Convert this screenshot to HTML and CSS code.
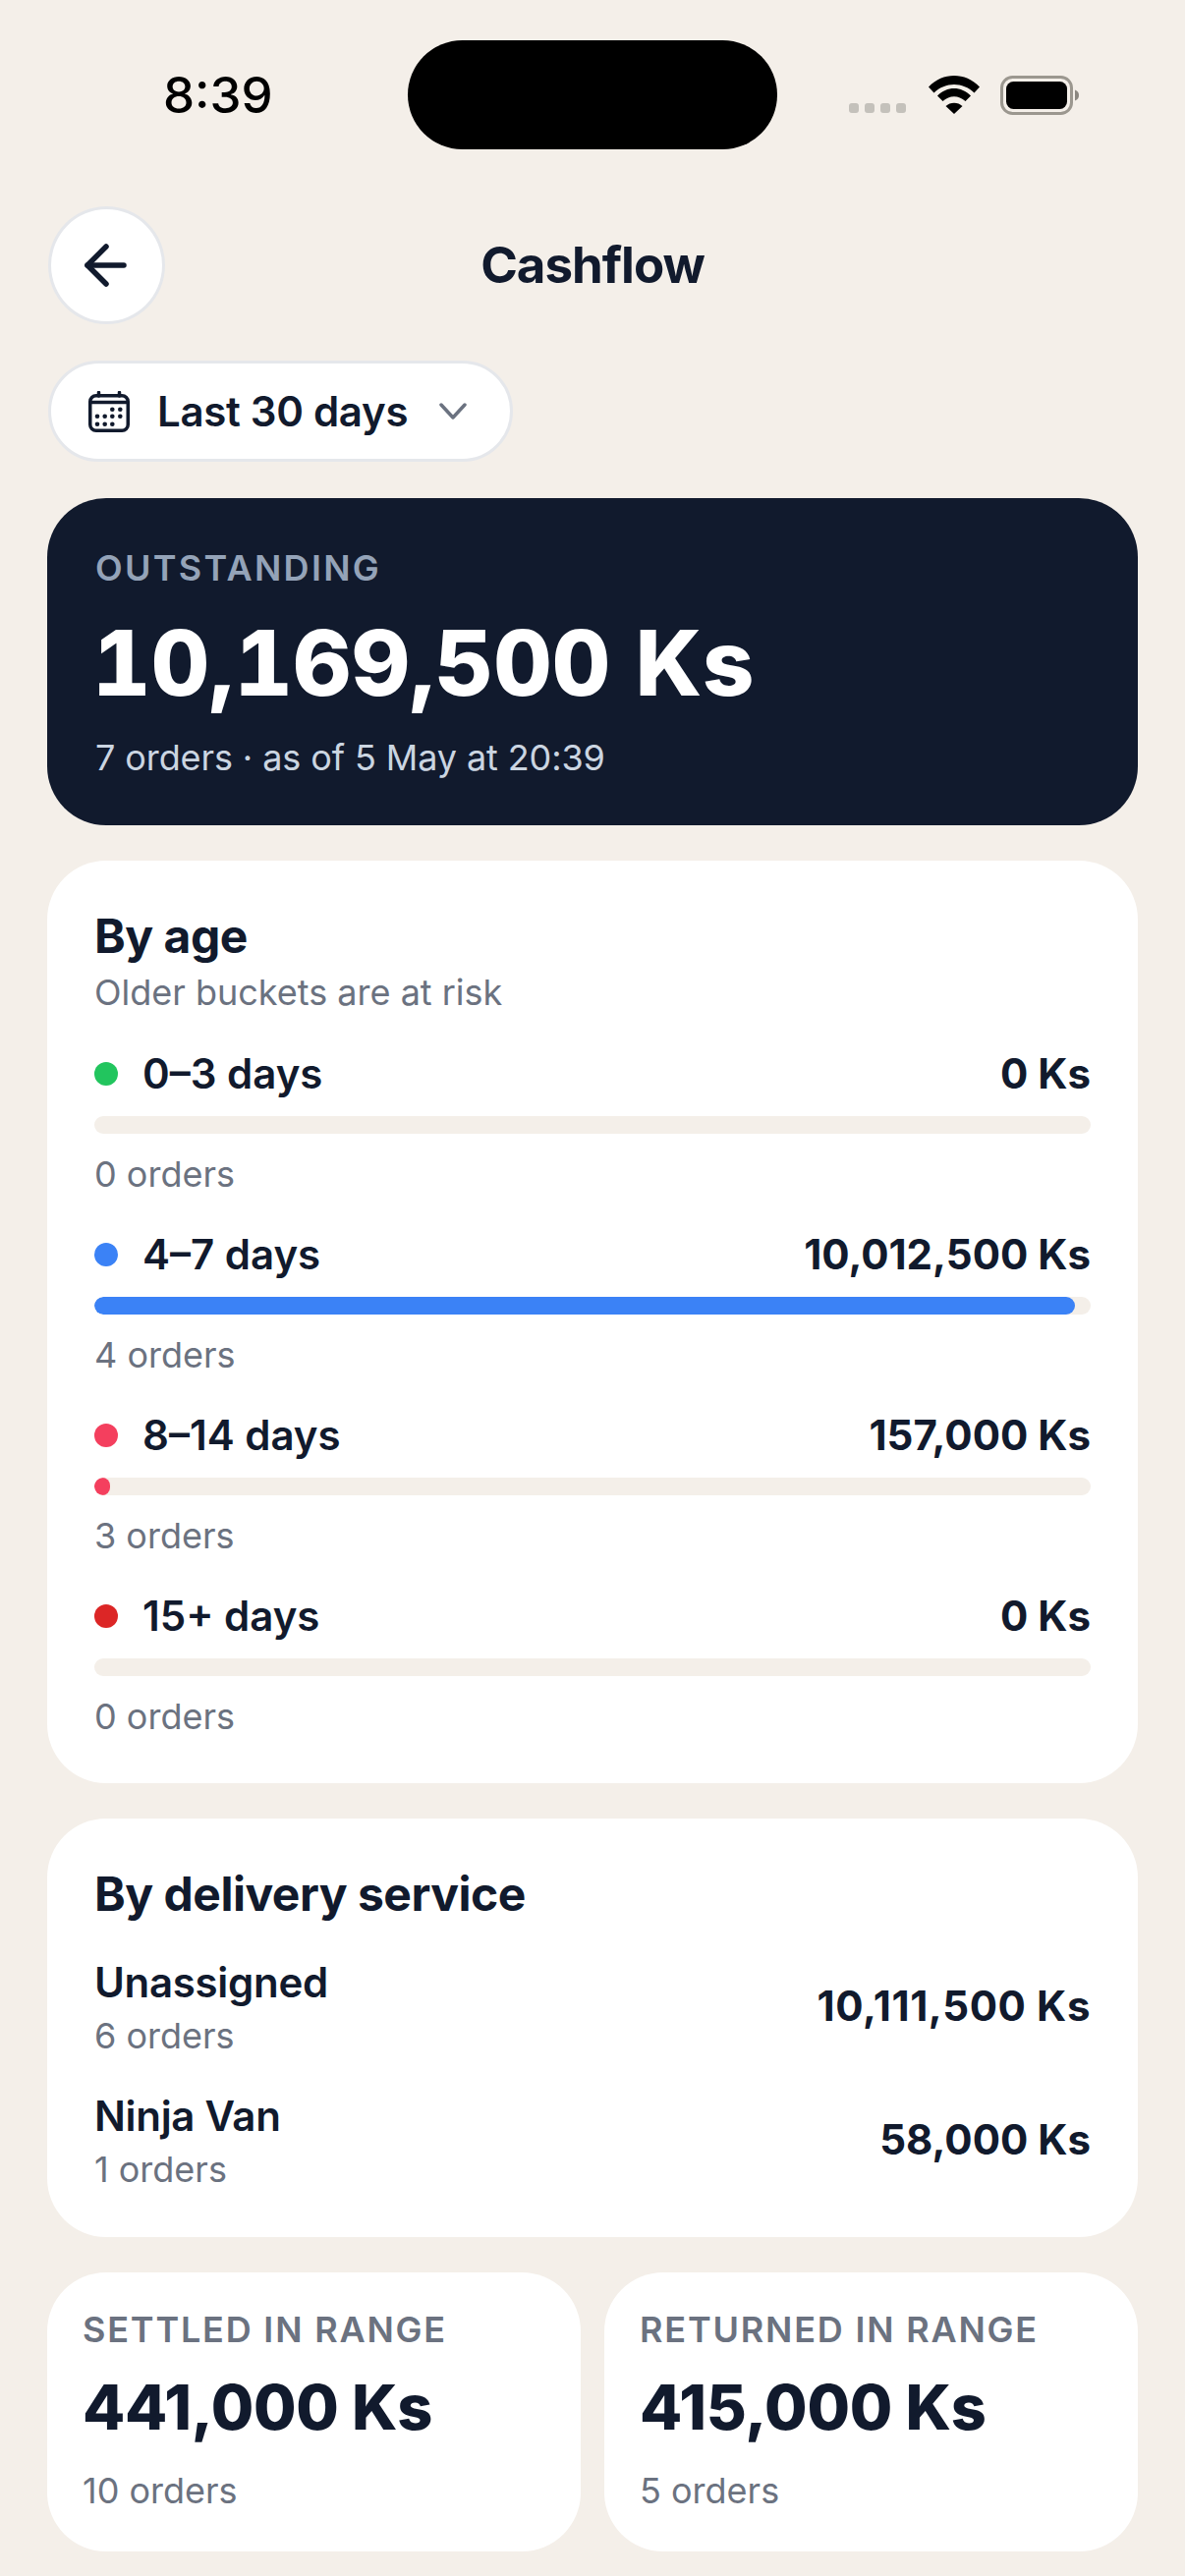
FILE: index.html
```html
<!DOCTYPE html>
<html lang="en">
<head>
    <meta charset="UTF-8">
    <meta name="viewport" content="width=device-width, initial-scale=1.0">
    <title>Cashflow</title>
    <link rel="stylesheet" href="styles.css">
</head>
<body>
    <div class="status-bar">
        <span class="time">8:39</span>
        <div class="island"></div>
        <div class="status-icons">
            <div class="signal"><i></i><i></i><i></i><i></i></div>
            <svg class="wifi" width="52" height="39" viewBox="0 0 52 39">
                <path d="M0 11.500C14.500 -3.800 37.500 -3.800 52 11.500L46.500 17.500C35 6 17 6 5.500 17.500Z"/>
                <path d="M9 20.500C18.500 10.500 33.500 10.500 43 20.500L37.500 26C30.500 19.500 21.500 19.500 14.500 26Z"/>
                <path d="M17.500 31C22 26.500 30 26.500 34.500 31L26 39Z"/>
            </svg>
            <svg class="battery" width="80" height="40" viewBox="0 0 80 40">
                <rect x="1.500" y="1.500" width="71" height="37" rx="11" fill="none" stroke="#9b978f" stroke-width="3"/>
                <rect x="6" y="6" width="62" height="28" rx="7.500" fill="#000"/>
                <path d="M76 14.500C79 15.500 80 17.500 80 20C80 22.500 79 24.500 76 25.500Z" fill="#8b8780"/>
            </svg>
        </div>
    </div>

    <header class="top-bar">
        <button class="back-btn">
            <svg width="44" height="44" viewBox="0 0 44 44" fill="none" stroke="#111a2d" stroke-width="5.500" stroke-linecap="round" stroke-linejoin="round">
                <path d="M41 22H4"/>
                <path d="M23 3L4 22L23 41"/>
            </svg>
        </button>
        <h1>Cashflow</h1>
    </header>

    <button class="range-pill">
        <svg width="42" height="42" viewBox="0 0 42 42" fill="none" stroke="#111a2d">
            <rect x="1.750" y="4.750" width="38.500" height="35.500" rx="6" stroke-width="3.500"/>
            <path d="M1.750 11.500H40.250" stroke-width="3.500"/>
            <path d="M10.500 1.500V5M31.500 1.500V5" stroke-width="3.500" stroke-linecap="round"/>
            <g fill="#111a2d" stroke="none">
                <circle cx="24.300" cy="18.700" r="2.300"/><circle cx="32.300" cy="18.700" r="2.300"/>
                <circle cx="9" cy="25.700" r="2.300"/><circle cx="16.700" cy="25.700" r="2.300"/><circle cx="24.300" cy="25.700" r="2.300"/><circle cx="32.300" cy="25.700" r="2.300"/>
                <circle cx="9" cy="33.700" r="2.300"/><circle cx="16.700" cy="33.700" r="2.300"/><circle cx="24.300" cy="33.700" r="2.300"/>
            </g>
        </svg>
        <span>Last 30 days</span>
        <svg class="chevron" width="28" height="17" viewBox="0 0 28 17" fill="none" stroke="#6b7280" stroke-width="3.500" stroke-linecap="round" stroke-linejoin="round">
            <path d="M2 2L14 15L26 2"/>
        </svg>
    </button>

    <main>
        <section class="hero">
            <div class="hero-label">OUTSTANDING</div>
            <div class="hero-value">10,169,500 Ks</div>
            <div class="hero-sub">7 orders · as of 5 May at 20:39</div>
        </section>

        <section class="card age-card">
            <h2>By age</h2>
            <p class="muted subtitle">Older buckets are at risk</p>

            <div class="bucket">
                <div class="bucket-head">
                    <span class="bucket-name"><i class="dot green"></i>0–3 days</span>
                    <strong>0 Ks</strong>
                </div>
                <div class="track"></div>
                <p class="muted">0 orders</p>
            </div>
            <div class="bucket">
                <div class="bucket-head">
                    <span class="bucket-name"><i class="dot blue"></i>4–7 days</span>
                    <strong>10,012,500 Ks</strong>
                </div>
                <div class="track"><div class="fill blue" style="width: 98.46%"></div></div>
                <p class="muted">4 orders</p>
            </div>
            <div class="bucket">
                <div class="bucket-head">
                    <span class="bucket-name"><i class="dot pink"></i>8–14 days</span>
                    <strong>157,000 Ks</strong>
                </div>
                <div class="track"><div class="fill pink" style="width: 1.54%"></div></div>
                <p class="muted">3 orders</p>
            </div>
            <div class="bucket">
                <div class="bucket-head">
                    <span class="bucket-name"><i class="dot red"></i>15+ days</span>
                    <strong>0 Ks</strong>
                </div>
                <div class="track"></div>
                <p class="muted">0 orders</p>
            </div>
        </section>

        <section class="card service-card">
            <h2>By delivery service</h2>
            <div class="service">
                <div class="service-info">
                    <div class="service-name">Unassigned</div>
                    <p class="muted">6 orders</p>
                </div>
                <strong class="wide-ones">10,111,500 Ks</strong>
            </div>
            <div class="service">
                <div class="service-info">
                    <div class="service-name">Ninja Van</div>
                    <p class="muted">1 orders</p>
                </div>
                <strong>58,000 Ks</strong>
            </div>
        </section>

        <div class="stats">
            <section class="card stat">
                <div class="stat-label">SETTLED IN RANGE</div>
                <div class="stat-value">441,000 Ks</div>
                <p class="muted">10 orders</p>
            </section>
            <section class="card stat">
                <div class="stat-label">RETURNED IN RANGE</div>
                <div class="stat-value">415,000 Ks</div>
                <p class="muted">5 orders</p>
            </section>
        </div>
    </main>
</body>
</html>
```

FILE: styles.css
```css
* {
    box-sizing: border-box;
}

body {
    margin: 0;
    height: 2622px;
    overflow: hidden;
    font-family: Inter, "Liberation Sans", sans-serif;
    background: #f4efe9;
    color: #111a2d;
}

h1, h2, p {
    margin: 0;
}

button {
    font-family: inherit;
    color: inherit;
    cursor: pointer;
}

.status-bar {
    display: flex;
    align-items: center;
    height: 111px;
    margin-top: 41px;
    padding-left: 166px;
}

.time {
    width: 249px;
    font-size: 51px;
    font-weight: 500;
    color: #000;
}

.island {
    width: 376px;
    height: 111px;
    border-radius: 56px;
    background: #000;
}

.status-icons {
    display: flex;
    align-items: center;
    margin-left: 73px;
}

.signal {
    display: flex;
    gap: 6px;
    margin-top: 26px;
    margin-right: 23px;
}

.signal i {
    width: 10px;
    height: 10px;
    border-radius: 3px;
    background: #c4c1bb;
}

.wifi {
    margin-right: 21px;
}

.top-bar {
    position: relative;
    display: flex;
    align-items: center;
    justify-content: center;
    height: 120px;
    margin-top: 58px;
    padding-bottom: 2px;
}

.top-bar h1 {
    font-size: 51px;
    font-weight: 700;
    letter-spacing: -1px;
}

.back-btn {
    position: absolute;
    left: 49px;
    top: 0;
    display: flex;
    align-items: center;
    justify-content: center;
    width: 119px;
    height: 120px;
    padding: 0 3px 0 0;
    border: 3px solid #e5e7eb;
    border-radius: 50%;
    background: #fff;
}

.range-pill {
    display: flex;
    align-items: center;
    width: 473px;
    height: 103px;
    margin: 37px 0 0 49px;
    padding: 0 0 0 38px;
    border: 3px solid #e5e7eb;
    border-radius: 52px;
    background: #fff;
}

.range-pill span {
    margin-left: 28px;
    font-size: 42px;
    font-weight: 600;
    letter-spacing: -0.300px;
}

.chevron {
    margin-left: 32px;
}

main {
    display: flex;
    flex-direction: column;
    gap: 36px;
    padding: 37px 48px 0;
}

.hero {
    height: 333px;
    padding: 49px 49px 0;
    border-radius: 60px;
    background: #111a2d;
    color: #fff;
}

.hero-label {
    font-size: 36px;
    line-height: 44px;
    font-weight: 600;
    letter-spacing: 2.300px;
    color: #94a3b8;
}

.hero-value {
    margin: 17px 0 0 -3px;
    font-size: 92px;
    line-height: 116px;
    font-weight: 800;
    letter-spacing: 0.300px;
    font-variant-numeric: tabular-nums;
}

.hero-sub {
    margin-top: 15px;
    font-size: 36px;
    line-height: 47px;
    letter-spacing: -0.100px;
    color: #cbd5e1;
}

.card {
    border-radius: 60px;
    background: #fff;
}

.card h2 {
    font-size: 48px;
    line-height: 58px;
    font-weight: 700;
    letter-spacing: -0.500px;
}

.muted {
    font-size: 36px;
    line-height: 48px;
    color: #6b7280;
}

.card strong {
    font-size: 42px;
    font-weight: 700;
}

.card .wide-ones {
    letter-spacing: 0.600px;
}

.age-card {
    height: 939px;
    padding: 48px 48px 0;
}

.subtitle {
    margin-top: 4px;
    margin-bottom: 32px;
}

.bucket {
    height: 184px;
}

.bucket-head {
    display: flex;
    align-items: center;
    justify-content: space-between;
    height: 52px;
}

.bucket-name {
    display: flex;
    align-items: center;
    gap: 25px;
    font-size: 42px;
    font-weight: 600;
}

.dot {
    width: 24px;
    height: 24px;
    margin-top: 2px;
    border-radius: 50%;
}

.track {
    height: 18px;
    margin-top: 18px;
    border-radius: 9px;
    background: #f4efe9;
    overflow: hidden;
}

.fill {
    height: 100%;
    border-radius: 9px;
}

.track + .muted {
    margin-top: 17px;
}

.green { background: #22c55e; }
.blue { background: #3b82f6; }
.pink { background: #f43f5e; }
.red { background: #dc2626; }

.service-card {
    height: 426px;
    padding: 48px 48px 0;
}

.service {
    display: flex;
    align-items: center;
    justify-content: space-between;
    height: 106px;
    margin-top: 31px;
}

.service + .service {
    margin-top: 30px;
}

.service-info {
    padding-top: 6px;
}

.service-name {
    margin-bottom: 4px;
    font-size: 42px;
    line-height: 52px;
    font-weight: 600;
    letter-spacing: -0.300px;
}

.stats {
    display: grid;
    grid-template-columns: 1fr 1fr;
    gap: 24px;
}

.stat {
    height: 284px;
    padding: 36px 36px 0;
}

.stat-label {
    font-size: 36px;
    line-height: 44px;
    font-weight: 600;
    letter-spacing: 1.800px;
    color: #6b7280;
}

.stat-value {
    margin-top: 17px;
    font-size: 63px;
    line-height: 80px;
    font-weight: 800;
    letter-spacing: -0.300px;
}

.stat .muted {
    margin-top: 21px;
}
```
